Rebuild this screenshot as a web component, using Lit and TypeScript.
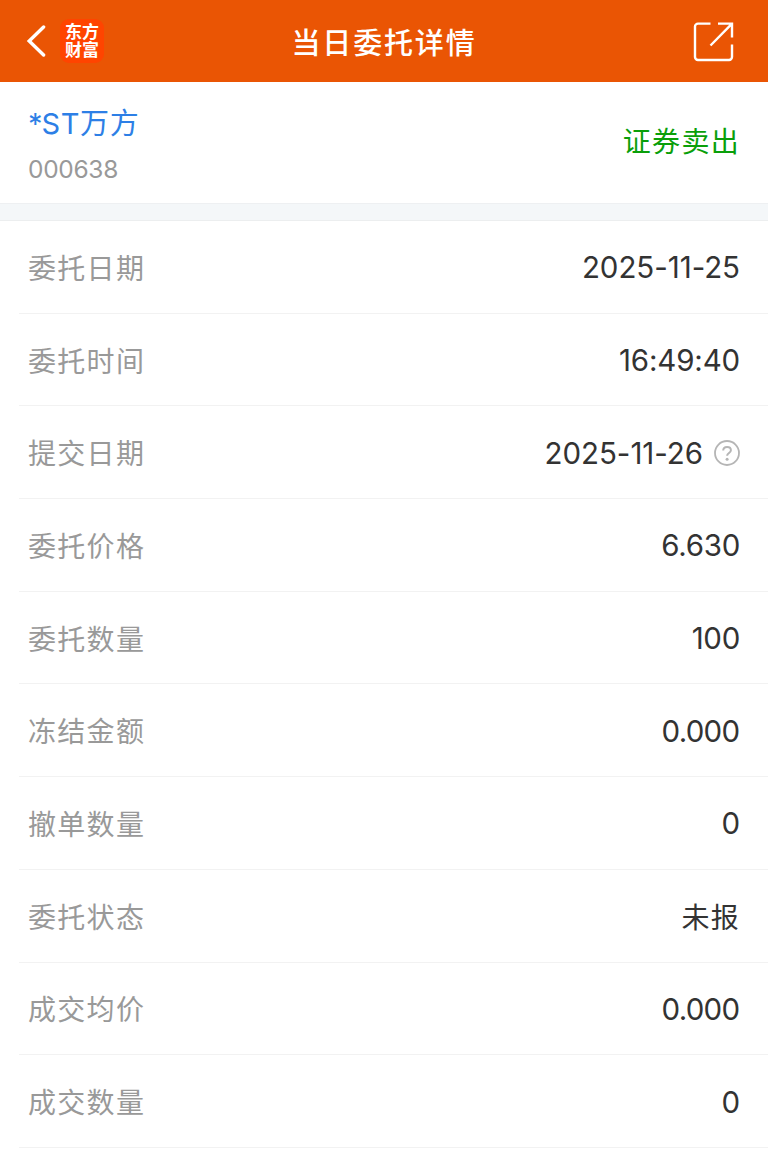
import { LitElement, html, css, svg } from "lit";
import { customElement } from "lit/decorators.js";

interface Row {
  label: string;
  value: string;
  kind: "date" | "time" | "num" | "zero" | "cjk";
  help?: boolean;
}

const ROWS: Row[] = [
  { label: "委托日期", value: "2025-11-25", kind: "date" },
  { label: "委托时间", value: "16:49:40", kind: "time" },
  { label: "提交日期", value: "2025-11-26", kind: "date", help: true },
  { label: "委托价格", value: "6.630", kind: "num" },
  { label: "委托数量", value: "100", kind: "num" },
  { label: "冻结金额", value: "0.000", kind: "zero" },
  { label: "撤单数量", value: "0", kind: "zero" },
  { label: "委托状态", value: "未报", kind: "cjk" },
  { label: "成交均价", value: "0.000", kind: "zero" },
  { label: "成交数量", value: "0", kind: "zero" },
];

@customElement("app-root")
export class AppRoot extends LitElement {
  static styles = css`
    :host {
      display: block;
      height: 1173px;
      overflow: hidden;
      background: #fff;
      color: #333;
      font-family: Inter, "Noto Sans CJK SC", sans-serif;
    }
    * {
      box-sizing: border-box;
    }
    svg {
      display: block;
    }
    .bar {
      height: 82px;
      background: #ea5504;
      color: #fff;
      display: grid;
      grid-template-columns: 1fr auto 1fr;
      align-items: center;
      padding: 0 34px 0 26px;
    }
    .left {
      display: flex;
      align-items: center;
      gap: 13px;
    }
    .logo {
      width: 44px;
      height: 44px;
      border-radius: 9px;
      background: #ff4400;
      font: 700 17px/18px "Noto Sans CJK SC", sans-serif;
      padding: 3px 4px 0 5px;
      word-break: break-all;
    }
    .title {
      font-size: 29px;
      font-weight: 500;
      letter-spacing: 1.85px;
      line-height: 44px;
      padding: 5px 0 0 8px;
    }
    .share {
      justify-self: end;
    }
    .stock {
      height: 121px;
      display: flex;
      justify-content: space-between;
      align-items: center;
      padding: 0 28px 0 28px;
    }
    .name {
      color: #2d7fe6;
      font-size: 29px;
      line-height: 44px;
      letter-spacing: 0.6px;
      padding-top: 1px;
    }
    .star {
      letter-spacing: -1px;
    }
    .code {
      color: #999;
      font-size: 24.5px;
      line-height: 30px;
      letter-spacing: -0.3px;
      margin-top: 8px;
    }
    .side {
      color: #0a9f0a;
      font-size: 28px;
      letter-spacing: 1.3px;
      line-height: 44px;
      margin-top: -1px;
    }
    .gap {
      height: 18px;
      background: #f4f7f9;
      border-top: 1px solid #eef0f2;
      border-bottom: 1px solid #eceeef;
    }
    .row {
      height: 92.7px;
      margin-left: 19px;
      padding: 1px 28px 0 9px;
      border-bottom: 1px solid #f2f2f2;
      display: flex;
      align-items: center;
      justify-content: space-between;
    }
    .row:first-of-type {
      height: 92.9px;
    }
    .label {
      color: #999;
      font-size: 28px;
      letter-spacing: 1.3px;
      line-height: 44px;
      padding-top: 3px;
    }
    .value {
      display: flex;
      align-items: center;
      gap: 11px;
      font-size: 29.5px;
      line-height: 44px;
    }
    .date {
      letter-spacing: -0.05px;
    }
    .time {
      letter-spacing: -0.15px;
    }
    .num {
      letter-spacing: -0.3px;
    }
    .zero {
      letter-spacing: -0.75px;
      padding-right: 0.75px;
    }
    .cjk {
      font-size: 28px;
      letter-spacing: 1.3px;
      padding-top: 3px;
    }
  `;

  private help() {
    return svg`<svg width="26" height="26" viewBox="0 0 26 26" fill="none" stroke="#b5b5b5">
      <circle cx="13" cy="13" r="12" stroke-width="1.8" />
      <path d="M9.200 10.600c0-2.200 1.600-3.700 3.900-3.700s3.800 1.400 3.800 3.300c0 2.700-3.800 2.900-3.800 5.600" stroke-width="2" />
      <circle cx="13.100" cy="19.200" r="1.500" fill="#b5b5b5" stroke="none" />
    </svg>`;
  }

  render() {
    return html`
      <header class="bar">
        <div class="left">
          <svg width="21" height="32" viewBox="0 0 21 32" fill="none" stroke="#fff" stroke-width="3.4" stroke-linecap="round" stroke-linejoin="miter">
            <path d="M17.600 2 3.200 16 17.600 30" />
          </svg>
          <div class="logo">东方财富</div>
        </div>
        <div class="title">当日委托详情</div>
        <svg class="share" width="41" height="41" viewBox="0 0 41 41" fill="none" stroke="#fff" stroke-width="2.4">
          <path d="M17.500 2.600H5A3 3 0 0 0 2 5.600V36a3 3 0 0 0 3 3H36a3 3 0 0 0 3-3V23.500" />
          <path d="M25 2.600H39V16.500M39 2.600 17.500 24.500" />
        </svg>
      </header>
      <section class="stock">
        <div>
          <div class="name"><span class="star">*</span>ST万方</div>
          <div class="code">000638</div>
        </div>
        <div class="side">证券卖出</div>
      </section>
      <div class="gap"></div>
      ${ROWS.map(
        (r) => html`<div class="row">
          <span class="label">${r.label}</span>
          <span class="value ${r.kind}">${r.value}${r.help ? this.help() : ""}</span>
        </div>`
      )}
    `;
  }
}
